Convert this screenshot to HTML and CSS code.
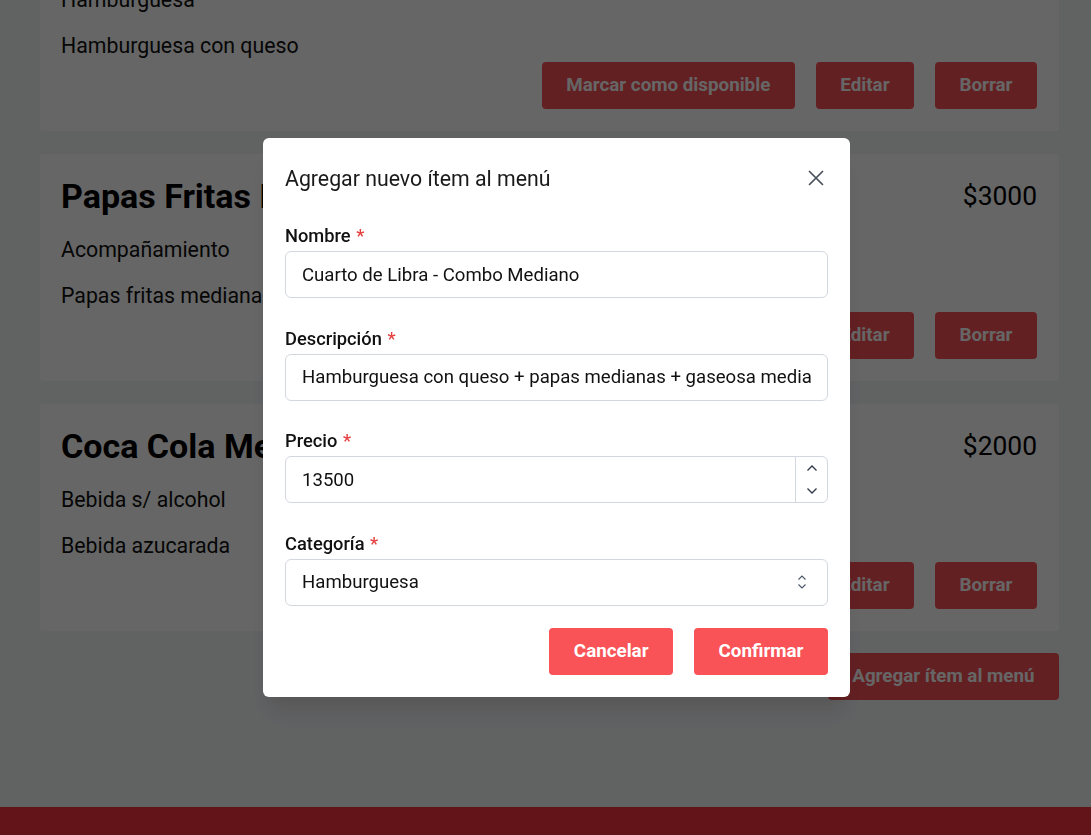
FILE: index.html
```html
<!DOCTYPE html>
<html lang="es">
<head>
<meta charset="utf-8">
<title>Menú</title>
<link rel="stylesheet" href="styles.css">
</head>
<body>
<main class="page">
  <section class="menu-list">
    <article class="card">
      <div class="card-head">
        <h2 class="card-title">Cuarto de Libra</h2>
        <span class="card-price">$9000</span>
      </div>
      <p class="card-cat">Hamburguesa</p>
      <p class="card-desc">Hamburguesa con queso</p>
      <div class="card-actions">
        <button class="btn btn-dim">Marcar como disponible</button>
        <button class="btn btn-dim">Editar</button>
        <button class="btn btn-dim">Borrar</button>
      </div>
    </article>
    <article class="card">
      <div class="card-head">
        <h2 class="card-title">Papas Fritas Medianas</h2>
        <span class="card-price">$3000</span>
      </div>
      <p class="card-cat">Acompañamiento</p>
      <p class="card-desc">Papas fritas medianas</p>
      <div class="card-actions">
        <button class="btn btn-dim">Marcar como no disponible</button>
        <button class="btn btn-dim">Editar</button>
        <button class="btn btn-dim">Borrar</button>
      </div>
    </article>
    <article class="card">
      <div class="card-head">
        <h2 class="card-title">Coca Cola Mediana</h2>
        <span class="card-price">$2000</span>
      </div>
      <p class="card-cat">Bebida s/ alcohol</p>
      <p class="card-desc">Bebida azucarada</p>
      <div class="card-actions">
        <button class="btn btn-dim">Marcar como no disponible</button>
        <button class="btn btn-dim">Editar</button>
        <button class="btn btn-dim">Borrar</button>
      </div>
    </article>
  </section>
  <div class="add-row">
    <button class="btn btn-dim">Agregar ítem al menú</button>
  </div>
</main>
<footer class="site-footer"></footer>

<div class="overlay">
  <div class="modal" role="dialog" aria-modal="true">
    <header class="modal-head">
      <h3 class="modal-title">Agregar nuevo ítem al menú</h3>
      <button class="close-btn" aria-label="Cerrar">
        <svg width="16" height="16" viewBox="0 0 16 16"><path d="M1.5 1.5 L14.5 14.5 M14.5 1.5 L1.5 14.5" stroke="currentColor" stroke-width="1.7" stroke-linecap="round" fill="none"/></svg>
      </button>
    </header>
    <form class="modal-form">
      <div class="field">
        <label class="field-label">Nombre <span class="req">*</span></label>
        <div class="input-box"><input class="input" type="text" value="Cuarto de Libra - Combo Mediano"></div>
      </div>
      <div class="field">
        <label class="field-label">Descripción <span class="req">*</span></label>
        <div class="input-box"><input class="input" type="text" value="Hamburguesa con queso + papas medianas + gaseosa mediana"></div>
      </div>
      <div class="field">
        <label class="field-label">Precio <span class="req">*</span></label>
        <div class="input-box">
          <input class="input" type="text" value="13500">
          <div class="stepper">
            <span class="step step-up">
              <svg width="12" height="8" viewBox="0 0 12 8"><path d="M1.5 6.5 L6 2 L10.5 6.5" stroke="#2d3748" stroke-width="1.3" fill="none"/></svg>
            </span>
            <span class="step step-down">
              <svg width="12" height="8" viewBox="0 0 12 8"><path d="M1.5 1.5 L6 6 L10.5 1.5" stroke="#2d3748" stroke-width="1.3" fill="none"/></svg>
            </span>
          </div>
        </div>
      </div>
      <div class="field">
        <label class="field-label">Categoría <span class="req">*</span></label>
        <div class="input-box">
          <select class="input select">
            <option>Hamburguesa</option>
            <option>Acompañamiento</option>
            <option>Bebida s/ alcohol</option>
          </select>
          <span class="select-icon">
            <svg width="10" height="16" viewBox="0 0 10 16"><path d="M1.5 5.5 L5 2 L8.5 5.5 M1.5 10.5 L5 14 L8.5 10.5" stroke="#4a5568" stroke-width="1.1" fill="none"/></svg>
          </span>
        </div>
      </div>
      <div class="modal-actions">
        <button type="button" class="btn btn-red">Cancelar</button>
        <button type="button" class="btn btn-red">Confirmar</button>
      </div>
    </form>
  </div>
</div>
</body>
</html>
```
FILE: styles.css
```css
* { box-sizing: border-box; }

html, body {
  margin: 0;
  padding: 0;
}

body {
  background: #f3f4f6;
  font-family: Roboto, "Liberation Sans", Arial, sans-serif;
  color: #111;
  min-height: 835px;
  display: flex;
  flex-direction: column;
}

.page {
  padding: 0 32px 0 40px;
  flex: 1;
}

.menu-list {
  display: flex;
  flex-direction: column;
  gap: 23px;
  margin-top: -96px;
}

.card {
  background: #fff;
  border-radius: 4px;
  padding: 22px 22px 22px 21px;
}

.card-head {
  display: flex;
  justify-content: space-between;
  align-items: center;
  height: 40px;
}

.card-title {
  margin: 0;
  font-size: 34px;
  font-weight: 700;
  color: #000;
  line-height: 40px;
  white-space: nowrap;
}

.card-price {
  font-size: 26.4px;
  color: #000;
}

.card-cat,
.card-desc {
  margin: 0;
  font-size: 21.3px;
  line-height: 28px;
}

.card-cat { margin-top: 20px; }
.card-desc { margin-top: 18px; }

.card-actions {
  display: flex;
  justify-content: flex-end;
  gap: 21px;
  margin-top: 2px;
}

.btn {
  border: none;
  font-family: inherit;
  font-size: 18.8px;
  font-weight: 700;
  line-height: 27px;
  height: 47px;
  padding: 0 24.5px;
  border-radius: 4px;
  color: #fff;
  cursor: pointer;
}

.btn-dim { background: #f75055; }
.btn-red { background: #f95357; }

.add-row {
  display: flex;
  justify-content: flex-end;
  margin-top: 22px;
  padding-bottom: 107px;
}

.site-footer {
  height: 60px;
  background: #f8323c;
}

/* modal */
.overlay {
  position: fixed;
  inset: 0;
  background: rgba(0, 0, 0, 0.6);
  display: flex;
  align-items: center;
  justify-content: center;
  padding-left: 22px;
}

.modal {
  width: 587px;
  background: #fff;
  border-radius: 6px;
  padding: 22px;
  box-shadow: 0 20px 25px -5px rgba(0, 0, 0, 0.1), 0 10px 10px -5px rgba(0, 0, 0, 0.04);
}

.modal-head {
  display: flex;
  align-items: center;
  justify-content: space-between;
  height: 36px;
}

.modal-title {
  margin: 0;
  font-size: 21.3px;
  font-weight: 400;
  color: #1a1a1a;
}

.close-btn {
  border: none;
  background: none;
  padding: 0;
  margin-right: 4px;
  width: 16px;
  height: 16px;
  color: #4a5059;
  display: flex;
  cursor: pointer;
}

.modal-form {
  margin-top: 28px;
  display: flex;
  flex-direction: column;
  gap: 28.5px;
}

.field {
  display: flex;
  flex-direction: column;
  gap: 3px;
}

.field-label {
  font-size: 18.3px;
  font-weight: 500;
  line-height: 24px;
  color: #111;
}

.req {
  color: #e53e3e;
  margin-left: 1px;
}

.input-box {
  display: flex;
  align-items: stretch;
  height: 47px;
  border: 1px solid #d3d7de;
  border-radius: 6px;
  background: #fff;
  overflow: hidden;
}

.input {
  flex: 1;
  min-width: 0;
  border: none;
  outline: none;
  background: transparent;
  font-family: inherit;
  font-size: 18.6px;
  color: #111;
  padding: 0 16px;
}

.select {
  appearance: none;
  -webkit-appearance: none;
}

.select-icon {
  display: flex;
  align-items: center;
  padding: 0 20px 0 8px;
}

.stepper {
  width: 32px;
  border-left: 1px solid #d3d7de;
  display: flex;
  flex-direction: column;
}

.step {
  flex: 1;
  display: flex;
  justify-content: center;
}

.step-up { align-items: center; }
.step-down { align-items: center; padding-top: 2px; }

.modal-actions {
  display: flex;
  justify-content: flex-end;
  gap: 21px;
  margin-top: -6px;
}
```
